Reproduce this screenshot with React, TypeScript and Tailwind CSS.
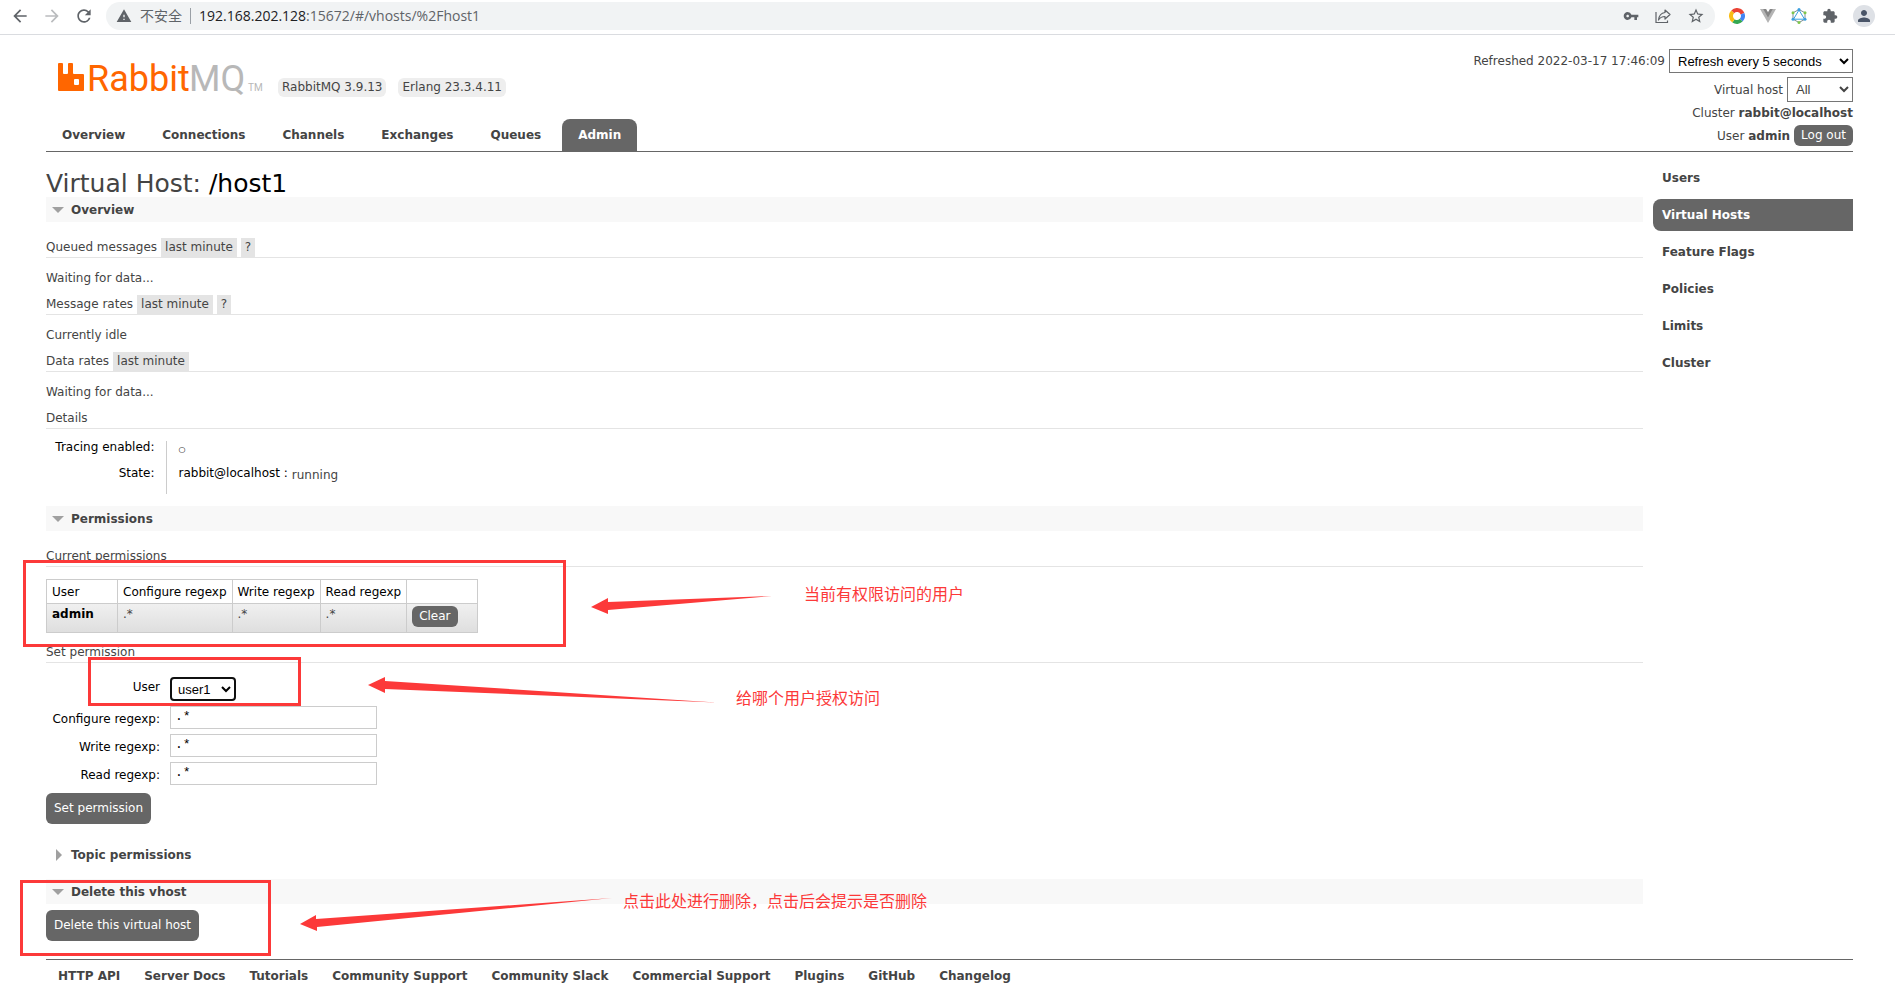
import { useState } from 'react';
import type { ReactNode } from 'react';
import { MdArrowBack, MdArrowForward, MdRefresh, MdWarning, MdVpnKey, MdStarBorder, MdExtension, MdPerson } from 'react-icons/md';

const tabs = ['Overview', 'Connections', 'Channels', 'Exchanges', 'Queues', 'Admin'];
const adminPages = ['Users', 'Virtual Hosts', 'Feature Flags', 'Policies', 'Limits', 'Cluster'];
const footerLinks = [
  'HTTP API',
  'Server Docs',
  'Tutorials',
  'Community Support',
  'Community Slack',
  'Commercial Support',
  'Plugins',
  'GitHub',
  'Changelog',
];

function BrowserBar() {
  return (
    <div className="flex h-[35px] items-start border-b border-[#dadce0] bg-white pt-0.5 text-[#5f6368]">
      <div className="flex h-7 w-[106px] shrink-0 items-center gap-3 pl-2.5">
        <button type="button" aria-label="Back"><MdArrowBack size={20} /></button>
        <button type="button" aria-label="Forward" className="text-[#babcbe]"><MdArrowForward size={20} /></button>
        <button type="button" aria-label="Reload"><MdRefresh size={20} /></button>
      </div>
      <div className="flex h-7 grow items-center rounded-full bg-[#f1f3f4] pr-2.5 pl-2.5 font-['Open_Sans','Noto_Sans_CJK_SC',sans-serif] text-sm">
        <MdWarning size={16} />
        <span className="ml-2">不安全</span>
        <span className="mx-2 h-4 w-px bg-[#9aa0a6]" />
        <span className="grow">
          <span className="text-[#202124]">192.168.202.128</span>:15672/#/vhosts/%2Fhost1
        </span>
        <div className="flex items-center gap-4">
          <MdVpnKey size={16} />
          <svg width="16" height="16" viewBox="0 0 16 16" fill="none" stroke="currentColor" strokeWidth="1.2">
            <path d="M1 4V14.500H12.500V12.500" />
            <path d="M10 2L15 6.500L10 11V8.500C7 8.500 5 9.500 3.500 12C4 7.500 6.500 5 10 4.500Z" strokeLinejoin="round" />
          </svg>
          <MdStarBorder size={18} />
        </div>
      </div>
      <div className="flex h-7 shrink-0 items-center gap-[15px] pr-5 pl-3.5">
        <svg width="16" height="16" viewBox="0 0 16 16" fill="none" strokeWidth="4">
          <path d="M3.700 3.800A6 6 0 0 1 13.500 5.700" stroke="#ea4335" />
          <path d="M13.500 5.700A6 6 0 0 1 12.200 12.200" stroke="#4285f4" />
          <path d="M12.200 12.200A6 6 0 0 1 4.500 12.900" stroke="#34a853" />
          <path d="M4.500 12.900A6 6 0 0 1 3.700 3.800" stroke="#f9bc15" />
        </svg>
        <svg width="16" height="16" viewBox="0 0 16 16">
          <path d="M0 1H6L8 4.500L10 1H16L8 15Z" fill="#b4b4b4" />
          <path d="M3.200 1H6L8 4.500L10 1H12.800L8 9.500Z" fill="#858585" />
        </svg>
        <svg width="16" height="16" viewBox="0 0 16 16" fill="none" strokeWidth="1">
          <path d="M8 1.500L14 4.800V11.200L8 14.500L2 11.200V4.800Z" stroke="#7d8f96" />
          <path d="M8 2L13.500 11.200H2.500Z" stroke="#3a9fe0" />
          <g fill="#7fc64b">
            <circle cx="2" cy="4.800" r="1.500" />
            <circle cx="14" cy="4.800" r="1.500" />
            <circle cx="8" cy="14.500" r="1.500" />
          </g>
          <g fill="#3a9fe0">
            <circle cx="8" cy="1.500" r="1.500" />
            <circle cx="2" cy="11.200" r="1.500" />
            <circle cx="14" cy="11.200" r="1.500" />
          </g>
        </svg>
        <MdExtension size={16} />
        <span className="flex size-[22px] items-center justify-center rounded-full bg-[#dee1e6] text-[#4a5568]">
          <MdPerson size={18} />
        </span>
      </div>
    </div>
  );
}

function Logo() {
  return (
    <a href="#/" aria-label="RabbitMQ">
      <svg width="206" height="46" viewBox="0 -6 206 46" className="font-['Roboto',sans-serif]">
        <path
          d="M1 3Q1 2 2 2H5Q6 2 6 3V12Q6 13 7 13H10Q11 13 11 12V3Q11 2 12 2H15Q16 2 16 3V12Q16 13 17 13H26Q27 13 27 14V29Q27 30 26 30H2Q1 30 1 29ZM17 19V23Q17 24 18 24H21Q22 24 22 23V19Q22 18 21 18H18Q17 18 17 19Z"
          fill="#f60"
          fillRule="evenodd"
        />
        <text x="30" y="30" fontSize="36" fill="#f60">Rabbit</text>
        <text x="132" y="30" fontSize="36" fill="#b8b8b8">MQ</text>
        <text x="191" y="30" fontSize="10" fill="#b8b8b8">TM</text>
      </svg>
    </a>
  );
}

function Header() {
  return (
    <header className="flex items-end justify-between border-b border-[#666]">
      <div>
        <div className="flex items-end pb-[18px] pl-[11px]">
          <Logo />
          <div className="mb-1 ml-[15px] flex gap-3 leading-[19px]">
            <span className="rounded-md bg-[#eee] px-1">RabbitMQ 3.9.13</span>
            <span className="rounded-md bg-[#eee] px-1">Erlang 23.3.4.11</span>
          </div>
        </div>
        <nav className="flex gap-[5px] font-bold">
          {tabs.map((tab) => (
            <a
              key={tab}
              href={`#/${tab.toLowerCase()}`}
              className={
                tab === 'Admin'
                  ? 'rounded-t-lg bg-[#666] px-4 leading-8 text-white'
                  : 'px-4 leading-8'
              }
            >
              {tab}
            </a>
          ))}
        </nav>
      </div>
      <div className="flex flex-col items-end pb-[5px]">
        <div className="mb-1 flex items-center gap-1">
          <label htmlFor="update-every">Refreshed 2022-03-17 17:46:09</label>
          <select id="update-every" className="h-6 w-[184px] border border-[#767676] bg-white pl-1 font-['Liberation_Sans',sans-serif] text-[13px] text-black">
            <option>Refresh every 5 seconds</option>
            <option>Refresh every 30 seconds</option>
            <option>Do not refresh</option>
          </select>
        </div>
        <div className="flex items-center gap-1">
          <label htmlFor="show-vhost">Virtual host</label>
          <select id="show-vhost" className="h-[25px] w-[66px] border border-[#767676] bg-white pl-1 font-['Liberation_Sans',sans-serif] text-[13px] text-[#444]">
            <option>All</option>
            <option>/</option>
            <option>/host1</option>
          </select>
        </div>
        <div className="leading-[23px]">Cluster <b>rabbit@localhost</b></div>
        <div className="flex items-center gap-1">
          <span>User <b>admin</b></span>
          <button type="button" className="rounded-md bg-[#666] px-[7px] leading-[21px] text-white">Log out</button>
        </div>
      </div>
    </header>
  );
}

interface SectionTitleProps {
  children: ReactNode;
  closed?: boolean;
}

function SectionTitle({ children, closed }: SectionTitleProps) {
  return (
    <h2 className={closed ? 'flex h-[25px] items-center font-bold' : 'flex h-[25px] items-center bg-[#f8f8f8] font-bold'}>
      <svg width="12" height="12" viewBox="0 0 12 12" className="mr-[7px] ml-1.5" fill="#a0a0a0">
        {closed ? <path d="M4 0L10 6L4 12Z" /> : <path d="M0 3H12L6 9Z" />}
      </svg>
      {children}
    </h2>
  );
}

interface SubTitleProps {
  title: string;
  range?: boolean;
  help?: boolean;
}

function SubTitle({ title, range, help }: SubTitleProps) {
  return (
    <h3 className="flex h-5 gap-1 border-b border-[#e4e4e4] leading-[19px]">
      {title}
      {range && <button type="button" className="bg-[#e4e4e4] px-1">last minute</button>}
      {help && <button type="button" className="bg-[#e4e4e4] px-1">?</button>}
    </h3>
  );
}

function ChartStatus({ children }: { children: ReactNode }) {
  return <p className="pt-3 pb-2 leading-[17px]">{children}</p>;
}

const regexps = ['Configure', 'Write', 'Read'];

function Permissions() {
  const [user, setUser] = useState('user1');

  return (
    <section>
      <SectionTitle>Permissions</SectionTitle>
      <div className="h-4" />
      <SubTitle title="Current permissions" />
      <table className="mt-3 border-collapse text-left text-black">
        <thead>
          <tr className="h-6">
            <th className="w-[71px] border border-[#ccc] px-[5px] font-normal">User</th>
            {regexps.map((name) => (
              <th key={name} className="border border-[#ccc] px-[5px] font-normal">{name} regexp</th>
            ))}
            <th className="w-[71px] border border-[#ccc]" aria-label="Actions" />
          </tr>
        </thead>
        <tbody>
          <tr className="h-[29px] bg-linear-to-b from-[#f0f0f0] to-[#dedede] align-top">
            <td className="border border-[#ccc] px-[5px] pt-0.5 font-bold">admin</td>
            {regexps.map((name) => (
              <td key={name} className="border border-[#ccc] px-[5px] pt-0.5 text-[#444]">.*</td>
            ))}
            <td className="border border-[#ccc] px-[5px] pt-0.5">
              <button type="button" className="rounded-md bg-[#666] px-[7px] leading-[21px] text-white">Clear</button>
            </td>
          </tr>
        </tbody>
      </table>
      <div className="h-2.5" />
      <SubTitle title="Set permission" />
      <form className="pt-3.5 text-black" onSubmit={(e) => e.preventDefault()}>
        <div className="grid grid-cols-[114px_207px] gap-x-2.5 gap-y-[5px] text-right">
          <label htmlFor="perm-user" className="leading-5">User</label>
          <select
            id="perm-user"
            value={user}
            onChange={(e) => setUser(e.target.value)}
            className="h-6 w-[66px] rounded-sm border-2 border-[#101010] bg-white pl-0.5 font-['Liberation_Sans',sans-serif] text-[13px]"
          >
            <option>user1</option>
            <option>admin</option>
          </select>
          {regexps.map((name) => (
            <div key={name} className="contents">
              <label htmlFor={`perm-${name}`} className="pt-1 leading-[19px]">{name} regexp:</label>
              <input
                id={`perm-${name}`}
                type="text"
                defaultValue=".*"
                className="h-[23px] border border-[#ccc] px-1 pb-0.5 font-['Liberation_Mono',monospace] text-[13px]"
              />
            </div>
          ))}
        </div>
        <button type="submit" className="mt-2 rounded-md bg-[#666] px-2 leading-[31px] text-white">Set permission</button>
      </form>
    </section>
  );
}

function Annotations() {
  return (
    <div className="pointer-events-none absolute inset-0 overflow-hidden font-['Noto_Sans_CJK_SC',sans-serif] text-base leading-6 text-[#fc3939]">
      <div className="absolute top-[560px] left-[23px] h-[87px] w-[543px] border-3 border-[#fc3939]" />
      <div className="absolute top-[657px] left-[88px] h-[49px] w-[213px] border-3 border-[#fc3939]" />
      <div className="absolute top-[880px] left-5 h-[76px] w-[251px] border-3 border-[#fc3939]" />
      <svg className="absolute top-0 left-0" width="800" height="960" fill="#fc3939">
        <path d="M591 607L608 598V602L772 596L608 610V614Z" />
        <path d="M368 685L385 677V681L716 702.500L385 689V693Z" />
        <path d="M300 924L316 915V919L612 898L317 927V931Z" />
      </svg>
      <span className="absolute top-[581px] left-[804px]">当前有权限访问的用户</span>
      <span className="absolute top-[685px] left-[736px]">给哪个用户授权访问</span>
      <span className="absolute top-[888px] left-[623px]">点击此处进行删除，点击后会提示是否删除</span>
    </div>
  );
}

export default function App() {
  return (
    <div className="relative bg-white font-['DejaVu_Sans',sans-serif] text-xs text-[#444]">
      <BrowserBar />
      <div className="pt-3.5 pr-[42px] pl-[46px]">
        <Header />
        <div className="flex items-start gap-2.5 pb-[18px]">
          <main className="grow pt-[18px]">
            <h1 className="text-[25px] leading-[27px]">
              Virtual Host: <span className="text-black">/host1</span>
            </h1>
            <SectionTitle>Overview</SectionTitle>
            <div className="h-4" />
            <SubTitle title="Queued messages" range help />
            <ChartStatus>Waiting for data...</ChartStatus>
            <SubTitle title="Message rates" range help />
            <ChartStatus>Currently idle</ChartStatus>
            <SubTitle title="Data rates" range />
            <ChartStatus>Waiting for data...</ChartStatus>
            <SubTitle title="Details" />
            <table className="my-3 leading-[13px] text-black">
              <tbody>
                <tr className="h-[26px] align-top">
                  <th className="w-[120px] border-r border-[#ccc] pr-[11px] text-right font-normal">Tracing enabled:</th>
                  <td className="pl-3 text-[8px] leading-[18px]">○</td>
                </tr>
                <tr className="h-[27px] align-top">
                  <th className="border-r border-[#ccc] pr-[11px] text-right font-normal">State:</th>
                  <td className="pl-3">
                    <div className="flex gap-1">
                      rabbit@localhost :
                      <span className="pt-0.5 text-[#444]">running</span>
                    </div>
                  </td>
                </tr>
              </tbody>
            </table>
            <Permissions />
            <div className="pt-[18px] pb-3">
              <SectionTitle closed>Topic permissions</SectionTitle>
            </div>
            <SectionTitle>Delete this vhost</SectionTitle>
            <button type="button" className="mt-1.5 rounded-md bg-[#666] px-2 leading-[31px] text-white">Delete this virtual host</button>
          </main>
          <nav className="flex w-[200px] shrink-0 flex-col gap-[5px] pt-2.5 font-bold">
            {adminPages.map((page) => (
              <a
                key={page}
                href={`#/${page.toLowerCase().replace(' ', '-')}`}
                className={
                  page === 'Virtual Hosts'
                    ? 'rounded-l-lg bg-[#666] pl-[9px] leading-8 text-white'
                    : 'pl-[9px] leading-8'
                }
              >
                {page}
              </a>
            ))}
          </nav>
        </div>
        <footer className="flex gap-6 border-t border-[#666] pt-2 pl-3 leading-[17px] font-bold">
          {footerLinks.map((link) => (
            <a key={link} href="#/">{link}</a>
          ))}
        </footer>
      </div>
      <Annotations />
    </div>
  );
}
